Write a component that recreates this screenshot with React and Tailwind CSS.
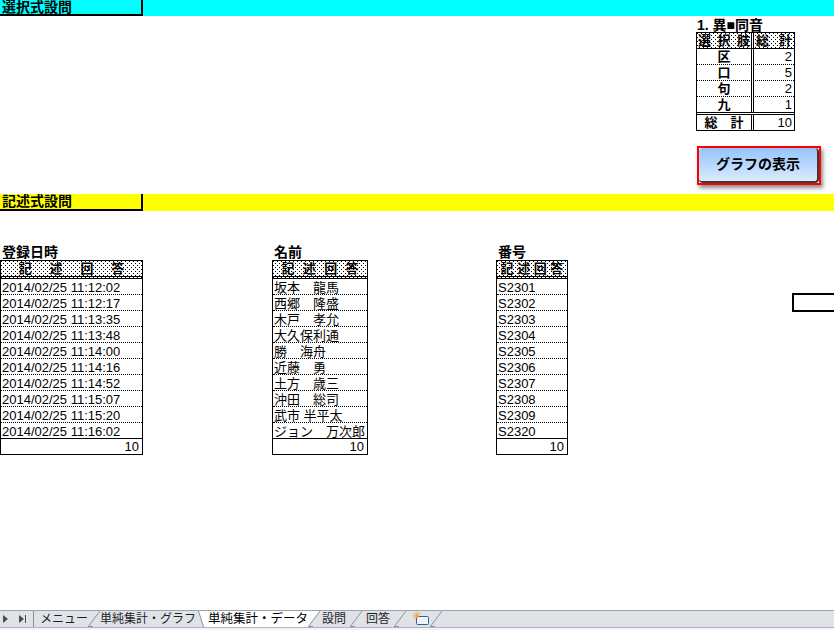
import React from 'react';

const dates = [
  '2014/02/25 11:12:02',
  '2014/02/25 11:12:17',
  '2014/02/25 11:13:35',
  '2014/02/25 11:13:48',
  '2014/02/25 11:14:00',
  '2014/02/25 11:14:16',
  '2014/02/25 11:14:52',
  '2014/02/25 11:15:07',
  '2014/02/25 11:15:20',
  '2014/02/25 11:16:02',
];

const names = [
  '坂本　龍馬',
  '西郷　隆盛',
  '木戸　孝允',
  '大久保利通',
  '勝　海舟',
  '近藤　勇',
  '土方　歳三',
  '沖田　総司',
  '武市 半平太',
  'ジョン　万次郎',
];

const numbers = ['S2301', 'S2302', 'S2303', 'S2304', 'S2305', 'S2306', 'S2307', 'S2308', 'S2309', 'S2320'];

const choices = [
  ['区', 2],
  ['口', 5],
  ['句', 2],
  ['九', 1],
];

// excel-style 12.5% gray fill for header cells (staggered single-pixel dots)
const PATTERN =
  'bg-white bg-[image:conic-gradient(at_1px_1px,transparent_75%,#000_0),conic-gradient(at_1px_1px,transparent_75%,#000_0)] bg-[length:4px_4px] bg-[position:0_0,2px_2px]';

const AnswerTable = ({ title, rows, className }) => (
  <div className={className}>
    <div className="h-[16px] text-[14px] font-bold leading-[16px] pl-[2px]">{title}</div>
    <div className="border border-black">
      <div className={`h-[18px] flex justify-evenly items-center text-[13px] font-bold leading-none border-b-[3px] border-double border-black ${PATTERN}`}>
        {['記', '述', '回', '答'].map((c) => (
          <span key={c}>{c}</span>
        ))}
      </div>
      {rows.map((r, i) => (
        <div
          key={r}
          className={`h-[16px] text-[13px] leading-[14px] pt-[2px] pl-[1px] whitespace-nowrap overflow-hidden border-b border-black ${
            i === rows.length - 1 ? 'border-solid' : 'border-dotted'
          }`}
        >
          {r}
        </div>
      ))}
      <div className="h-[15px] text-[13px] leading-[14px] pt-[1px] text-right pr-[3px]">10</div>
    </div>
  </div>
);

const ChoiceTable = () => (
  <div className="w-[99px] border border-black text-[13px]">
    <div className={`flex h-[16px] border-b border-black font-bold leading-[15px] ${PATTERN}`}>
      <div className="w-[57px] border-r-[3px] border-double border-black flex justify-between px-[1px]">
        <span>選</span>
        <span>択</span>
        <span>肢</span>
      </div>
      <div className="flex-1 flex justify-between px-[2px]">
        <span>総</span>
        <span>計</span>
      </div>
    </div>
    {choices.map(([c, n], i) => (
      <div
        key={c}
        className={`flex border-black ${
          i === choices.length - 1 ? 'h-[18px] border-b-[3px] border-double' : 'h-[16px] border-b border-dotted'
        }`}
      >
        <div className="w-[57px] border-r-[3px] border-double border-black text-center font-bold leading-[15px]">{c}</div>
        <div className="flex-1 text-right pr-[2px] leading-[14px] pt-[1px]">{n}</div>
      </div>
    ))}
    <div className="flex h-[15px]">
      <div className="w-[57px] border-r-[3px] border-double border-black text-center font-bold leading-[15px]">総　計</div>
      <div className="flex-1 text-right pr-[2px] leading-[14px] pt-[1px]">10</div>
    </div>
  </div>
);

const Slant = ({ active }) => (
  <svg width="12" height="16" viewBox="0 0 12 16" className="shrink-0">
    {active && <polygon points="0,0 12,0 0,16" fill="#fff" />}
    <line x1="0" y1="16" x2="12" y2="0" stroke="#8a929c" strokeWidth="1" />
    <line x1="0" y1="15.5" x2="5" y2="15.5" stroke="#8a929c" strokeWidth="1" />
  </svg>
);

const SheetTabs = () => (
  <div className="h-[20px] shrink-0 flex flex-col">
    <div className="h-[17px] bg-[#dfe3e8] border-t border-[#9ba3ad] flex items-stretch text-[12px] leading-[16px] text-[#1f1f1f]">
      <div className="w-[33px] flex items-center pl-[3px] gap-[10px]">
        <svg width="6" height="8" viewBox="0 0 6 8">
          <polygon points="0,0 5,4 0,8" fill="#4d4d4d" />
        </svg>
        <svg width="8" height="8" viewBox="0 0 8 8">
          <polygon points="0,0 5,4 0,8" fill="#4d4d4d" />
          <rect x="6" y="0" width="1" height="8" fill="#4d4d4d" />
        </svg>
      </div>
      <div className="w-px bg-[#8a929c]" />
      <div className="pl-[6px]">メニュー</div>
      <Slant />
      <div className="pl-0 pr-[2px]">単純集計・グラフ</div>
      <svg width="6" height="16" viewBox="0 0 6 16" className="shrink-0">
        <polygon points="0,0 6,0 6,16" fill="#fff" />
        <line x1="0.5" y1="0" x2="5.5" y2="16" stroke="#8a929c" strokeWidth="1" />
      </svg>
      <div className="bg-white pl-[4px] text-black text-[12.5px]">単純集計・データ</div>
      <Slant active />
      <div className="pl-[2px] pr-[4px]">設問</div>
      <Slant />
      <div className="pl-[4px] pr-[4px]">回答</div>
      <Slant />
      <div className="pl-[6px] flex items-center">
        <svg width="18" height="14" viewBox="0 0 18 14">
          <rect x="4.5" y="4.5" width="12" height="8" rx="1" fill="#eef3fb" stroke="#3d5f91" />
          <circle cx="5" cy="4" r="2" fill="#f5a623" />
          <g stroke="#f08a00" strokeWidth="1">
            <line x1="5" y1="0" x2="5" y2="1.5" />
            <line x1="1" y1="4" x2="2.5" y2="4" />
            <line x1="2" y1="1" x2="3" y2="2" />
            <line x1="8" y1="1" x2="7" y2="2" />
            <line x1="2" y1="7" x2="3" y2="6" />
          </g>
        </svg>
      </div>
      <Slant />
    </div>
    <div className="flex-1 bg-[#f1f3f6] border-t border-[#b0b6be]" />
  </div>
);

const App = () => {
  return (
    <div className="w-[834px] h-[630px] overflow-hidden flex flex-col bg-white text-black font-['Liberation_Sans','Noto_Sans_CJK_JP',sans-serif]">
      {/* 選択式 section */}
      <div className="h-[16px] shrink-0 bg-[#00ffff]">
        <div className="w-[143px] h-full border-r-2 border-b-2 border-black text-[14px] font-bold leading-[14px] pl-[2px]">
          選択式設問
        </div>
      </div>

      <div className="h-[178px] shrink-0 pl-[696px]">
        <div className="h-[16px] text-[14px] font-bold leading-[16px] pl-[1px] pt-[1px]">1. 異■同音</div>
        <ChoiceTable />
        <button className="ml-[1px] mt-[15px] w-[124px] h-[39px] border-2 border-[#ff0000] shadow-[2px_3px_4px_rgba(0,0,0,0.45)] p-0 block">
          <div className="h-full rounded-[4px] bg-linear-to-b from-[#94c3fb] to-[#dcebfd] border-r-2 border-b-2 border-[#3a3a3a] flex items-center justify-center text-[14px] font-bold">
            グラフの表示
          </div>
        </button>
      </div>

      {/* 記述式 section */}
      <div className="h-[17px] shrink-0 bg-[#ffff00]">
        <div className="w-[143px] h-full border-r-2 border-b-2 border-black text-[14px] font-bold leading-[15px] pl-[2px]">
          記述式設問
        </div>
      </div>

      <div className="flex items-start pt-[33px] shrink-0">
        <AnswerTable title="登録日時" rows={dates} className="w-[143px]" />
        <AnswerTable title="名前" rows={names} className="ml-[129px] w-[96px]" />
        <AnswerTable title="番号" rows={numbers} className="ml-[128px] w-[72px]" />
        <div className="ml-auto mt-[49px] w-[42px] h-[19px] border-2 border-r-0 border-black" />
      </div>

      <div className="flex-1" />
      <SheetTabs />
    </div>
  );
};

export default App;
